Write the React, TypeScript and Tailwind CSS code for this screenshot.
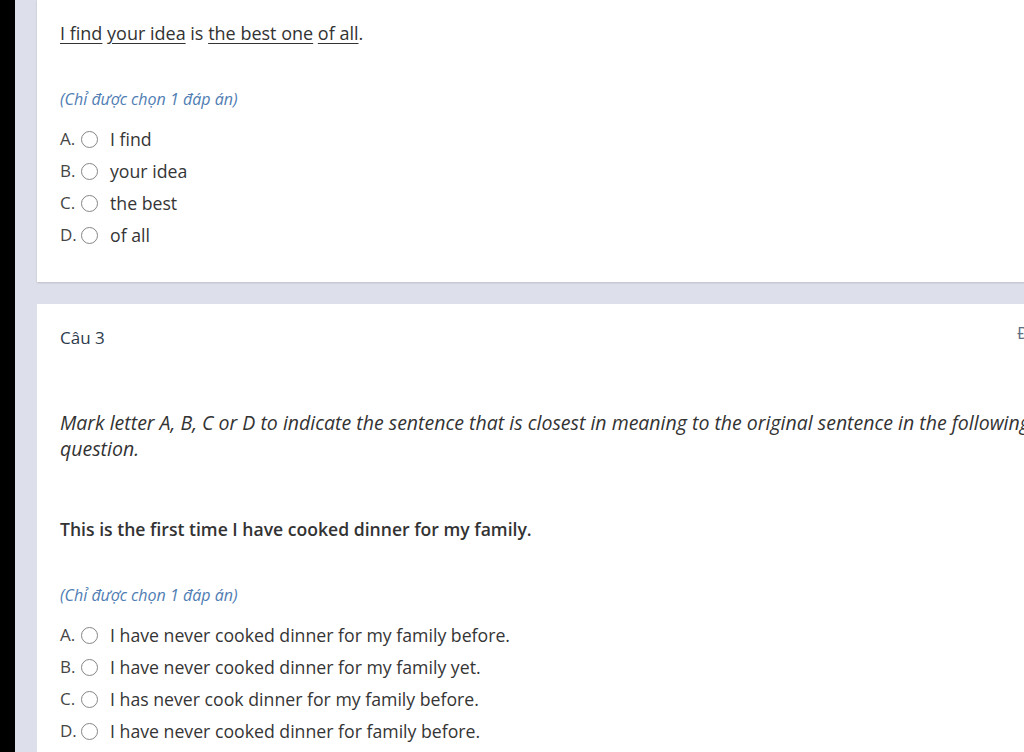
import React from "react";

const font = { fontFamily: '"Open Sans", "Noto Sans", sans-serif' };

function Option({ letter, text }: { letter: string; text: string }) {
  return (
    <div className="flex items-center h-[32px] text-[17.7px] text-[#353535]">
      <span className="w-[21px] text-[17px] text-[#454545]">{letter}</span>
      <span className="w-[17px] h-[17px] rounded-full border-[1.5px] border-[#858585] bg-white shrink-0" />
      <span className="ml-[12px]">{text}</span>
    </div>
  );
}

export default function App() {
  return (
    <div className="flex w-[1024px] h-[752px] overflow-hidden bg-[#dde0ea]" style={font}>
      <div className="w-[15px] shrink-0 bg-black" />
      <div className="pl-[22px] flex flex-col gap-[22px] shrink-0">
        <div className="w-[1100px] bg-white shadow-[0_1px_2px_rgba(0,0,0,0.15)] pl-[23px] pt-[20px] pb-[31px]">
          <p className="text-[18px] leading-[27px] text-[#333]">
            <span className="underline underline-offset-[3px]">I find</span>{" "}
            <span className="underline underline-offset-[3px]">your idea</span> is{" "}
            <span className="underline underline-offset-[3px]">the best one</span>{" "}
            <span className="underline underline-offset-[3px]">of all</span>.
          </p>
          <p className="mt-[40px] text-[16px] italic text-[#4f7db3] leading-[24px]">(Chỉ được chọn 1 đáp án)</p>
          <div className="mt-[12px]">
            <Option letter="A." text="I find" />
            <Option letter="B." text="your idea" />
            <Option letter="C." text="the best" />
            <Option letter="D." text="of all" />
          </div>
        </div>
        <div className="w-[1100px] bg-white pl-[23px] pt-[19px] pb-[30px]">
          <div className="flex items-start">
            <div className="w-[957px] pt-[2px] text-[17px] leading-[26px] text-[#2c3a4b]">Câu 3</div>
            <div className="text-[17px] leading-[20px] text-[#5f7085] whitespace-nowrap">Điểm: 1</div>
          </div>
          <p className="mt-[59px] text-[19.5px] leading-[26px] italic text-[#333] w-[1010px]">
            Mark letter A, B, C or D to indicate the sentence that is closest in meaning to the original sentence in the following question.
          </p>
          <p className="mt-[54px] text-[17.6px] leading-[27px] font-semibold text-[#333]">
            This is the first time I have cooked dinner for my family.
          </p>
          <p className="mt-[40px] text-[16px] italic text-[#4f7db3] leading-[24px]">(Chỉ được chọn 1 đáp án)</p>
          <div className="mt-[12px]">
            <Option letter="A." text="I have never cooked dinner for my family before." />
            <Option letter="B." text="I have never cooked dinner for my family yet." />
            <Option letter="C." text="I has never cook dinner for my family before." />
            <Option letter="D." text="I have never cooked dinner for family before." />
          </div>
        </div>
      </div>
    </div>
  );
}
